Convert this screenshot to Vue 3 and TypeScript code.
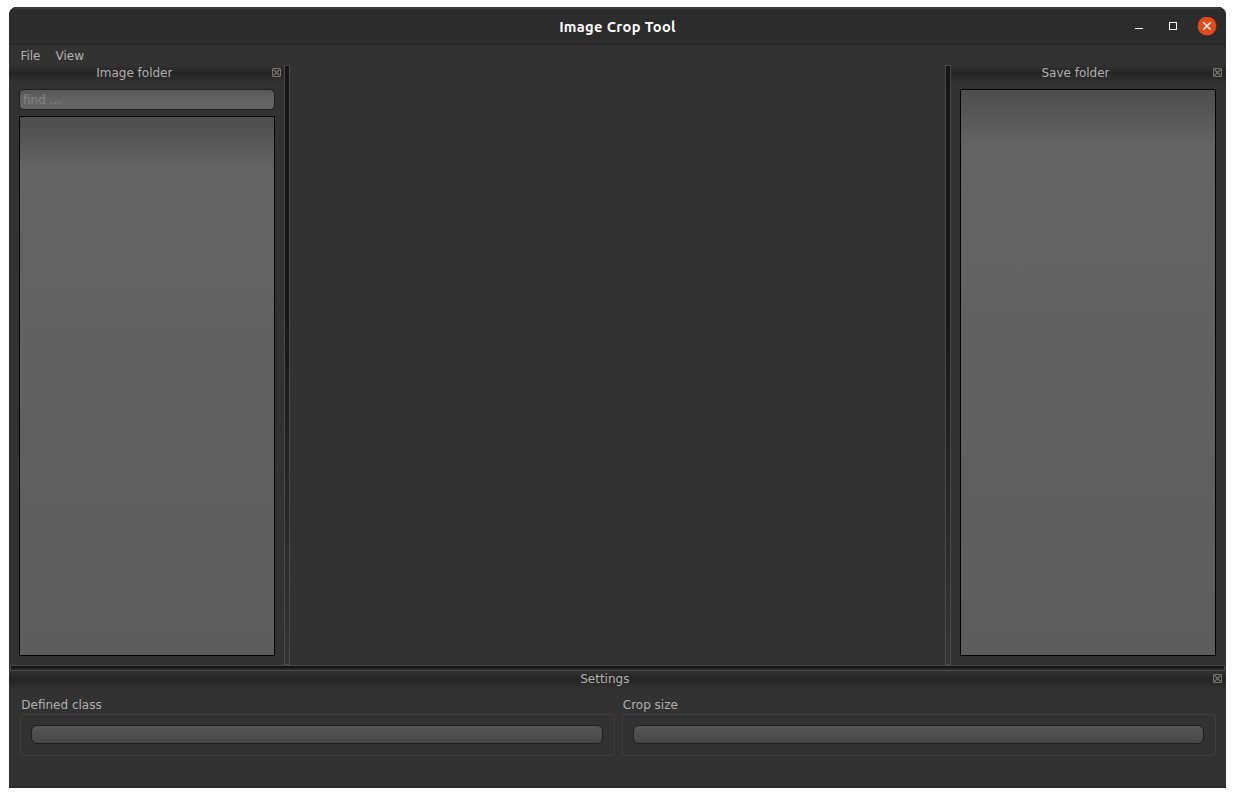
<script setup lang="ts">
interface Group { label: string }
const menus: string[] = ['File', 'View']
const groups: Group[] = [{ label: 'Defined class' }, { label: 'Crop size' }]
</script>

<template>
  <div class="page">
    <div class="window">
      <header class="titlebar">
        <h1>Image Crop Tool</h1>
        <div class="controls">
          <svg width="82" height="20" viewBox="0 0 82 20">
            <path d="M0 11.5H8" stroke="#fff" />
            <rect x="34.5" y="5.5" width="7" height="7" fill="none" stroke="#fff" />
            <circle cx="72" cy="9" r="9.4" fill="#e24a1a" />
            <path d="M68.3 5.3l7.4 7.4m0-7.4l-7.4 7.4" stroke="#fff" stroke-width="1.4" />
          </svg>
        </div>
      </header>
      <nav class="menubar"><span v-for="m in menus" :key="m">{{ m }}</span></nav>
      <main class="work">
        <section class="dock">
          <div class="dock-title"><span>Image folder</span>
            <svg class="close" width="9" height="9" viewBox="0 0 9 9"><rect x=".5" y=".5" width="8" height="8" rx=".5" /><path d="M1.5 1.5l6 6M7.5 1.5l-6 6" /></svg>
          </div>
          <input class="find" placeholder="find ..." />
          <div class="list"></div>
        </section>
        <div class="splitter"></div>
        <div class="canvas"></div>
        <div class="splitter"></div>
        <section class="dock right">
          <div class="dock-title"><span>Save folder</span>
            <svg class="close" width="9" height="9" viewBox="0 0 9 9"><rect x=".5" y=".5" width="8" height="8" rx=".5" /><path d="M1.5 1.5l6 6M7.5 1.5l-6 6" /></svg>
          </div>
          <div class="list"></div>
        </section>
      </main>
      <div class="hsplitter"></div>
      <section class="settings">
        <div class="dock-title"><span>Settings</span>
          <svg class="close" width="9" height="9" viewBox="0 0 9 9"><rect x=".5" y=".5" width="8" height="8" rx=".5" /><path d="M1.5 1.5l6 6M7.5 1.5l-6 6" /></svg>
        </div>
        <div class="groups">
          <div v-for="g in groups" :key="g.label" class="group">
            <label>{{ g.label }}</label>
            <div class="frame"><button class="bar" type="button"></button></div>
          </div>
        </div>
      </section>
    </div>
  </div>
</template>

<style>
body { background: #fff; }
</style>
<style scoped>
* { box-sizing: border-box; }
.page { width: 1235px; height: 797px; padding: 7px 9px 9px; overflow: hidden; }
.window {
  width: 1217px; height: 781px; background: #323232; color: #b1b1b1;
  border-radius: 8px 8px 0 0; overflow: hidden; display: flex; flex-direction: column;
  font: 12px/16px "DejaVu Sans", sans-serif;
  box-shadow: inset 0 -2px 0 #2d2d2d;
}
.titlebar {
  height: 38px; flex: none; display: grid; grid-template-columns: 1fr auto 1fr;
  background: #2c2c2c; border-top: 2px solid #3a3a3a; border-bottom: 1px solid #242424;
}
h1 { grid-column: 2; margin: 0; color: #fff; font: bold 14.667px/36px Ubuntu, "Noto Sans", sans-serif; letter-spacing: .33px; }
.controls { justify-self: end; padding: 8px 9px 0 0; height: 28px; }
.controls svg { display: block; }
.menubar { height: 20px; flex: none; display: flex; gap: 15px; padding: 3px 11.4px 0; }
.work { height: 600px; flex: none; display: flex; }
.dock { width: 275px; display: flex; flex-direction: column; padding-bottom: 9px; }
.dock-title {
  height: 18px; flex: none; display: flex; align-items: flex-start; padding: 0 4px 0 0;
  background: linear-gradient(#323232, #242424 45%, #323232);
}
.dock-title span { flex: 1; text-align: center; padding-right: 12.4px; }
.dock .dock-title { padding-right: 3px; }
.dock.right .dock-title { padding-right: 4px; }
.dock.right .dock-title span { padding-right: 13px; }
.close { margin-top: 3px; fill: none; stroke: #76736f; stroke-width: 1; }
.close path { stroke-width: 1.4; }
.find {
  height: 21px; margin: 6px 9px 6px 10px; padding: 0 3px; border: 1px solid #1e1e1e; border-radius: 5px;
  background: linear-gradient(#585858, #646464 60%, #646464); font: 12px "DejaVu Sans", sans-serif; color: #b1b1b1;
}
.find::placeholder { color: #858585; opacity: 1; }
.list {
  flex: 1; margin: 0 9px 0 10px; border: 1px solid #000;
  background: linear-gradient(#4d4d4d, #646464 10%, #5d5d5d);
}
.right .list { margin: 6px 10px 0 9px; }
.splitter { width: 6px; flex: none; border: 1px solid #4a4a4a; background: linear-gradient(#151515, #151515 40%, #212121 60%, #343434); }
.canvas { flex: 1; }
.hsplitter { height: 6px; flex: none; margin: 0 1px; border: 1px solid #4a4a4a; background: linear-gradient(#101010, #1c1c1c 50%, #343434); }
.settings { flex: 1; }
.groups { display: flex; gap: 7px; padding: 8px 10px 0 11px; }
.group { flex: 1; }
label { display: block; height: 17px; padding-left: 1.3px; }
.frame { height: 42px; border: 1px solid #3f3f3f; border-radius: 3px; padding: 10px 11px 10px 10px; }
.bar { display: block; width: 100%; height: 19px; border: 1px solid #1e1e1e; border-radius: 6px; background: linear-gradient(#565656, #464646); }
</style>
